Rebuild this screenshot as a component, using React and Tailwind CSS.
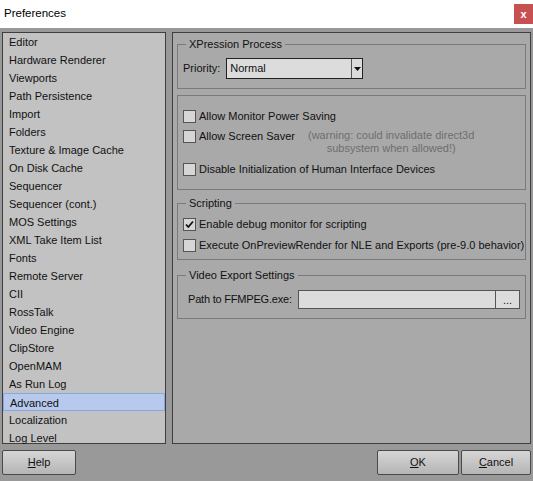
import React from "react";

const items = [
  "Editor","Hardware Renderer","Viewports","Path Persistence","Import","Folders",
  "Texture & Image Cache","On Disk Cache","Sequencer","Sequencer (cont.)","MOS Settings",
  "XML Take Item List","Fonts","Remote Server","CII","RossTalk","Video Engine","ClipStore",
  "OpenMAM","As Run Log","Advanced","Localization","Log Level",
];

function Check({ checked }) {
  return (
    <span className="inline-flex w-[13px] h-[13px] border border-[#555] bg-[#d6d6d6] items-center justify-center shrink-0">
      {checked && (
        <svg width="9" height="9" viewBox="0 0 9 9">
          <path d="M1 4.5 L3.3 7 L8 1.5" stroke="#111" strokeWidth="1.8" fill="none" />
        </svg>
      )}
    </span>
  );
}

function Group({ title, children, className = "" }) {
  return (
    <fieldset className={"border border-[#7a7a7a] px-[5px] shrink-0 min-w-0 " + className}>
      {title && <legend className="ml-[3px] px-[3px] text-[11px] leading-[14px]">{title}</legend>}
      {children}
    </fieldset>
  );
}

export default function App() {
  return (
    <div className="w-[533px] h-[481px] bg-[#999999] flex flex-col text-[#111] overflow-hidden" style={{ fontFamily: '"Liberation Sans", Arial, sans-serif' }}>
      <div className="h-[28px] bg-white flex items-center justify-between shrink-0">
        <span className="ml-[4px] text-[11.5px] text-black">Preferences</span>
        <div className="w-[19px] h-[20px] bg-[#c75050] self-start mt-[4px] flex items-center justify-center text-white text-[11px] font-bold">x</div>
      </div>
      <div className="flex gap-[6px] pl-[2px] pr-[2px] pt-[4px] h-[416px] shrink-0">
        <div className="w-[164px] shrink-0 bg-[#c2c2c2] border border-[#3f3f3f] flex flex-col text-[11px]">
          {items.map((t) => (
            <div key={t} className={"h-[18px] leading-[19px] pl-[6px] shrink-0 " + (t === "Advanced" ? "bg-[#b7c9ec] border border-[#8aa6e0] leading-[17px] pl-[5px]" : "")}>{t}</div>
          ))}
        </div>
        <div className="flex-1 min-w-0 bg-[#a9a9a9] border border-[#3f3f3f] px-[4px] pt-[4px] flex flex-col gap-[6px] text-[11px]">
          <Group title="XPression Process" className="h-[52px]">
            <div className="flex items-center mt-[7px]">
              <span>Priority:</span>
              <div className="ml-[6px] w-[137px] h-[21px] border border-[#222] bg-[#dcdcdc] flex">
                <span className="flex-1 pl-[3px] leading-[19px]">Normal</span>
                <span className="w-[11px] border-l border-[#555] flex items-center justify-center">
                  <svg width="7" height="4" viewBox="0 0 7 4"><path d="M0 0 H7 L3.5 4 Z" fill="#111" /></svg>
                </span>
              </div>
            </div>
          </Group>
          <Group className="h-[95px] pt-[10px] flex flex-col">
            <div className="flex items-center gap-[3px] h-[20px]"><Check /><span>Allow Monitor Power Saving</span></div>
            <div className="flex items-start gap-[3px]">
              <span className="mt-[4px]"><Check /></span>
              <span className="leading-[20px]">Allow Screen Saver</span>
              <span className="ml-[10px] text-[#6e6e6e] text-center leading-[13px] mt-[3px]">(warning: could invalidate direct3d<br />subsystem when allowed!)</span>
            </div>
            <div className="flex items-center gap-[3px] h-[20px] mt-[4px]"><Check /><span>Disable Initialization of Human Interface Devices</span></div>
          </Group>
          <Group title="Scripting" className="h-[64px] pt-[4px]">
            <div className="flex items-center gap-[3px] h-[20px]"><Check checked /><span>Enable debug monitor for scripting</span></div>
            <div className="flex items-center gap-[3px] h-[20px] mt-[1px]"><Check /><span className="whitespace-nowrap">Execute OnPreviewRender for NLE and Exports (pre-9.0 behavior)</span></div>
          </Group>
          <Group title="Video Export Settings" className="h-[51px] mt-[2px]">
            <div className="flex items-center mt-[8px] pl-[5px]">
              <span className="tracking-[-0.2px]">Path to FFMPEG.exe:</span>
              <div className="ml-[6px] flex-1 h-[19px] bg-[#dcdcdc] border border-[#555] flex">
                <span className="flex-1" />
                <span className="w-[24px] border-l border-[#555] flex items-center justify-center leading-[16px]">...</span>
              </div>
            </div>
          </Group>
        </div>
      </div>
      <div className="flex items-center px-[2px] mt-[6px] text-[11px]">
        <button className="w-[74px] h-[25px] border border-[#4a4a4a] rounded-[2px] bg-gradient-to-b from-[#d6d6d6] to-[#b5b5b5]"><u>H</u>elp</button>
        <div className="flex-1" />
        <button className="w-[82px] h-[25px] border border-[#4a4a4a] rounded-[2px] bg-gradient-to-b from-[#d6d6d6] to-[#b5b5b5]"><u>O</u>K</button>
        <button className="ml-[2px] w-[70px] h-[25px] border border-[#4a4a4a] rounded-[2px] bg-gradient-to-b from-[#d6d6d6] to-[#b5b5b5]"><u>C</u>ancel</button>
      </div>
    </div>
  );
}
